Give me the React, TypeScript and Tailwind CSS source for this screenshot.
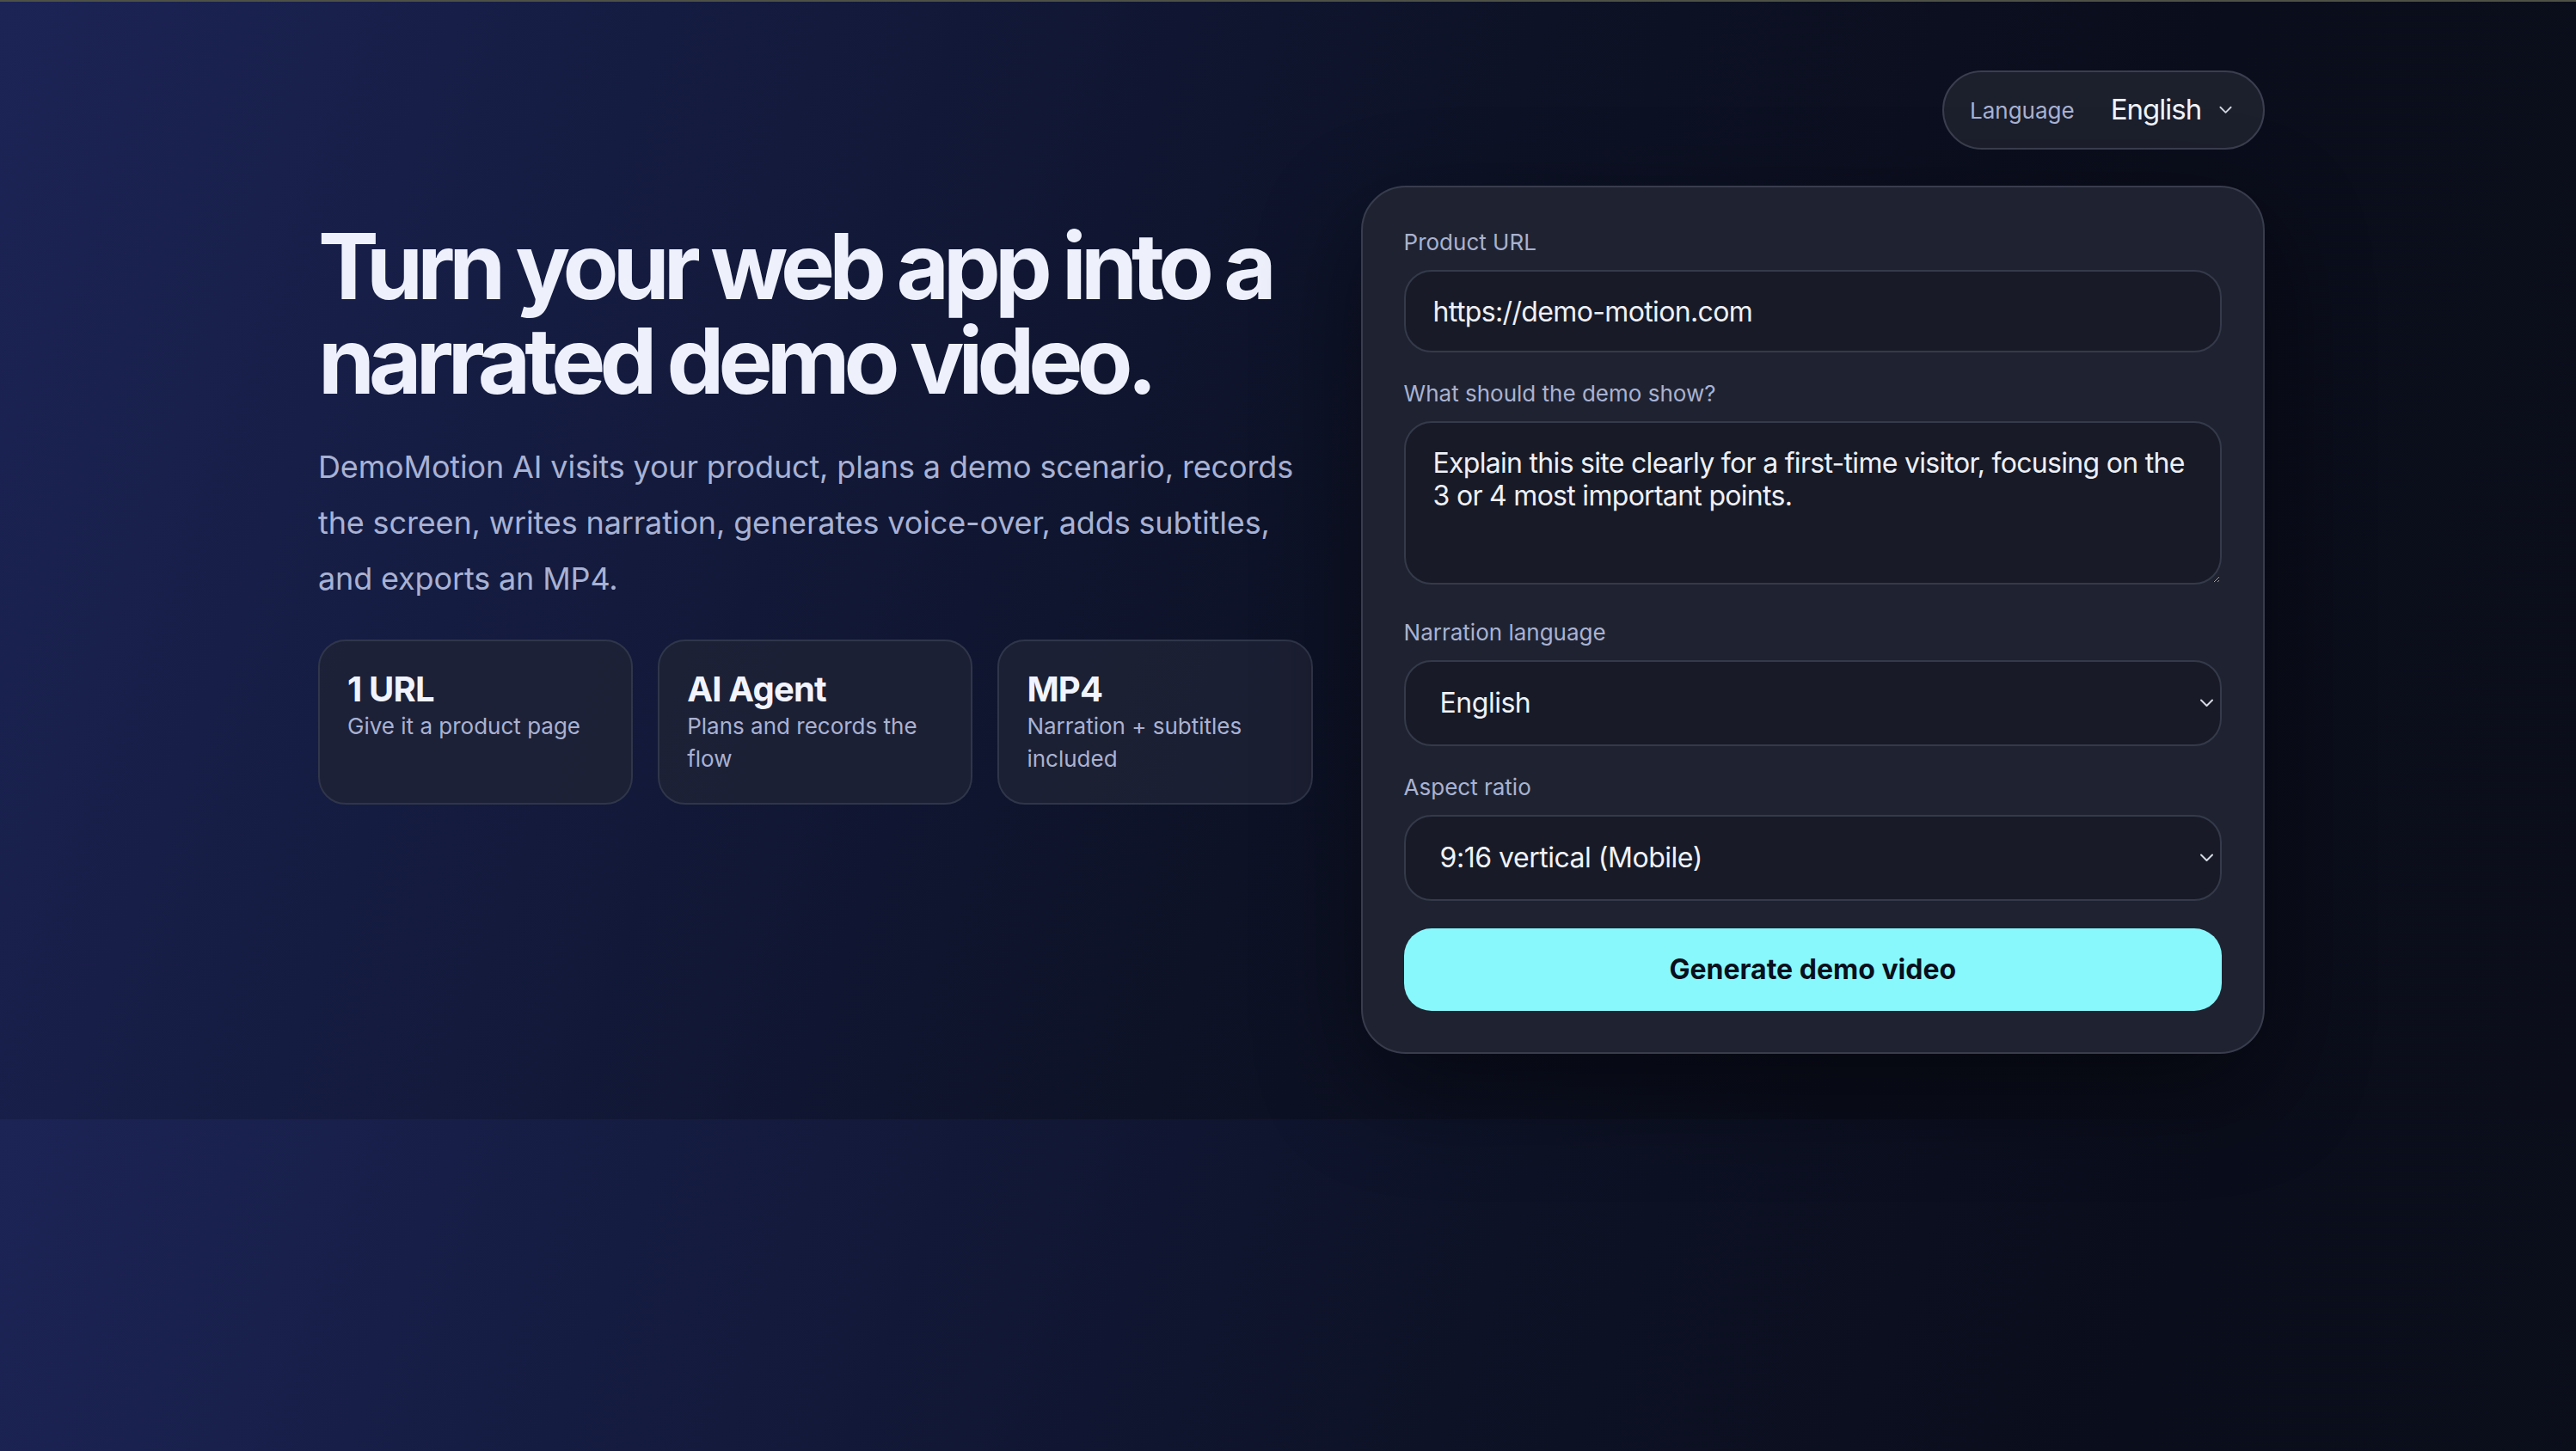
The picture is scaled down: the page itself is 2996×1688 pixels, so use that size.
import React from "react";

function Chevron({ className }: { className?: string }) {
  return (
    <svg className={className} viewBox="0 0 16 10" fill="none" stroke="currentColor" strokeWidth="2" strokeLinecap="round" strokeLinejoin="round">
      <path d="M1.5 1.5 8 8l6.5-6.5" />
    </svg>
  );
}

function FeatureCard({ title, text }: { title: string; text: string }) {
  return (
    <div className="rounded-[32px] border-2 border-[#30364a] bg-[#1f2336]/80 p-[32px]">
      <div className="text-[40px] font-bold leading-[48px] tracking-[-0.02em] text-[#f1f4ff]">{title}</div>
      <div className="text-[26px] leading-[38px] text-[#a9b2d2]">{text}</div>
    </div>
  );
}

function SelectField({ value }: { value: string }) {
  return (
    <div className="relative mt-[16px]">
      <select
        defaultValue={value}
        className="block h-[100px] w-full appearance-none rounded-[32px] border-2 border-[#353a4a] bg-[#181b27] pl-[40px] pr-[48px] text-[32px] tracking-[-0.015em] text-[#f0f2f8] outline-none"
      >
        <option value={value}>{value}</option>
      </select>
      <Chevron className="pointer-events-none absolute right-[9px] top-1/2 h-[10px] w-[17px] -translate-y-1/2 text-[#d6dae4]" />
    </div>
  );
}

export default function App() {
  return (
    <div className="min-h-screen w-full bg-[linear-gradient(110deg,#1c2456_0%,#131a3c_28%,#0d1226_52%,#0a0d1b_75%,#0b0e1a_100%)] bg-[length:100%_1302px] font-[Inter,sans-serif]">
      <div className="h-[2px] w-full bg-[#4d5146]" />
      <div className="pl-[8px]">
        <div className="mx-auto w-[2264px] pt-[80px]">
          <header className="flex justify-end">
            <div className="flex h-[92px] w-[375px] items-center rounded-full border-2 border-[#3a3e4e] bg-[#1c1f2c] pl-[30px]">
              <span className="text-[26px] text-[#a9b2d3]">Language</span>
              <span className="ml-[42px] text-[33px] tracking-[-0.03em] text-[#f1f3fa]">English</span>
              <Chevron className="ml-auto mr-[36px] h-[10px] w-[15px] text-[#cfd4e0]" />
            </div>
          </header>

          <main className="mt-[40px] grid grid-cols-[1.1fr_1fr] items-start gap-[56px]">
            <section className="pt-[41px]">
              <h1 className="text-[106px] font-bold leading-[110px] tracking-[-0.065em] text-[#eef1fc]">
                Turn your web app into a<br />narrated demo video.
              </h1>
              <p className="mt-[36px] text-[36px] leading-[65px] tracking-[-0.004em] text-[#a8b2d4]">
                DemoMotion AI visits your product, plans a demo scenario, records the screen, writes narration,
                generates voice-over, adds subtitles, and exports an MP4.
              </p>
              <div className="mt-[38px] grid grid-cols-3 gap-[29px]">
                <FeatureCard title="1 URL" text="Give it a product page" />
                <FeatureCard title="AI Agent" text="Plans and records the flow" />
                <FeatureCard title="MP4" text="Narration + subtitles included" />
              </div>
            </section>

            <form className="mt-[2px] rounded-[52px] border-2 border-[#383c4c] bg-[#1f2331] p-[48px] shadow-[0_40px_120px_rgba(0,0,0,0.45)]">
              <label className="block text-[26px] leading-[32px] text-[#a9b2d1]">Product URL</label>
              <input
                defaultValue="https://demo-motion.com"
                className="mt-[16px] block h-[96px] w-full rounded-[32px] border-2 border-[#353a4a] bg-[#181b27] px-[32px] text-[32px] tracking-[-0.02em] text-[#eef0f7] outline-none"
              />

              <label className="mt-[32px] block text-[26px] leading-[32px] text-[#a9b2d1]">What should the demo show?</label>
              <textarea
                defaultValue="Explain this site clearly for a first-time visitor, focusing on the 3 or 4 most important points."
                className="mt-[16px] block h-[190px] w-full resize-y rounded-[32px] border-2 border-[#353a4a] bg-[#181b27] px-[32px] pb-[26px] pt-[28px] text-[32px] leading-[38px] tracking-[-0.022em] text-[#eef0f7] outline-none"
              />

              <label className="mt-[40px] block text-[26px] leading-[32px] text-[#a9b2d1]">Narration language</label>
              <SelectField value="English" />

              <label className="mt-[32px] block text-[26px] leading-[32px] text-[#a9b2d1]">Aspect ratio</label>
              <SelectField value="9:16 vertical (Mobile)" />

              <button
                type="button"
                className="mt-[32px] block h-[96px] w-full rounded-[32px] bg-[#88f8fd] text-[32px] font-bold text-[#0a0f1c]"
              >
                Generate demo video
              </button>
            </form>
          </main>
        </div>
      </div>
    </div>
  );
}
